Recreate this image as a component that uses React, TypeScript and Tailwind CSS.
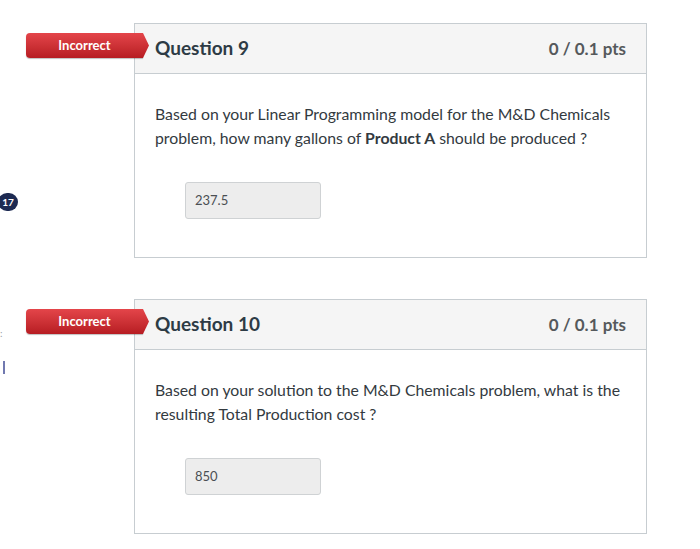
import React from "react";

const font = { fontFamily: "Lato, 'Open Sans', sans-serif" };

function Badge() {
  return (
    <div className="absolute left-[26px] top-[10px] flex h-[25px] items-stretch">
      <div className="flex w-[117px] items-center justify-center rounded-l-[4px] bg-gradient-to-b from-[#e4454a] to-[#b71c22] text-[13px] font-bold text-white shadow-[0_1px_1px_rgba(0,0,0,0.25)]">
        Incorrect
      </div>
      <svg width="6" height="25" viewBox="0 0 6 25" className="block">
        <defs>
          <linearGradient id="bg" x1="0" y1="0" x2="0" y2="1">
            <stop offset="0" stopColor="#e4454a" />
            <stop offset="1" stopColor="#b71c22" />
          </linearGradient>
        </defs>
        <polygon points="0,0 6,12.5 0,25" fill="url(#bg)" />
      </svg>
    </div>
  );
}

function Question({
  title,
  children,
  answer,
}: {
  title: string;
  children: React.ReactNode;
  answer: string;
}) {
  return (
    <div className="relative flex">
      <div className="w-[134px] shrink-0" />
      <Badge />
      <div className="w-[513px] border border-[#c7cdd1] bg-white">
        <div className="flex h-[50px] items-center justify-between border-b border-[#c7cdd1] bg-[#f5f5f5] pl-[20px] pr-[20px]">
          <span className="text-[19px] font-bold text-[#2d3b45]">{title}</span>
          <span className="text-[17px] font-bold text-[#55595c]">0 / 0.1 pts</span>
        </div>
        <div className="px-[20px] pb-[38px] pt-[28px]">
          <p className="text-[15.8px] leading-[24px] text-[#333a3f]">{children}</p>
          <div className="ml-[30px] mt-[32px] flex h-[37px] w-[136px] items-center rounded-[3px] border border-[#cfd2d4] bg-[#ededed] px-[9px] text-[13px] text-[#4a4f53]">
            {answer}
          </div>
        </div>
      </div>
    </div>
  );
}

export default function App() {
  return (
    <div className="relative h-[549px] w-[700px] overflow-hidden bg-white" style={font}>
      <div className="flex flex-col gap-[41px] pt-[23px]">
        <Question title="Question 9" answer="237.5">
          Based on your Linear Programming model for the M&amp;D Chemicals problem, how many gallons of{" "}
          <b className="font-bold">Product A</b> should be produced ?
        </Question>
        <Question title="Question 10" answer="850">
          Based on your solution to the M&amp;D Chemicals problem, what is the resulting Total Production cost ?
        </Question>
      </div>
      <div className="absolute left-[-2px] top-[193px] flex h-[18px] w-[20px] items-center justify-center rounded-full bg-[#1d2a52] text-[10px] font-bold text-white">
        17
      </div>
      <div className="absolute left-0 top-[328px] text-[10px] leading-none text-[#9aa0a6]">:</div>
      <div className="absolute left-[3px] top-[361px] h-[13px] w-[2px] bg-[#7179b0]" />
    </div>
  );
}
